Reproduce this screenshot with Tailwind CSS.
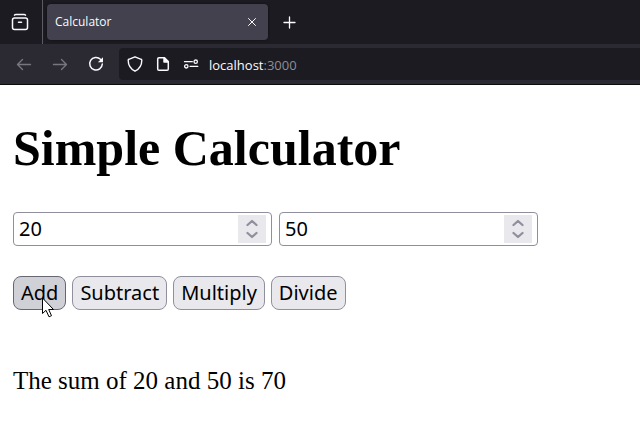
<!DOCTYPE html>
<html lang="en">
<head>
<meta charset="utf-8">
<meta name="viewport" content="width=device-width, initial-scale=1">
<title>Calculator</title>
<script src="https://cdn.jsdelivr.net/npm/@tailwindcss/browser@4"></script>
</head>
<body class="min-h-screen bg-white text-black">
<header class="border-b border-[#0c0c0d] bg-[#2b2a33] font-['Open_Sans','Noto_Sans',sans-serif] text-[#fbfbfe]">
  <div class="flex h-11 items-center bg-[#1c1b22]">
    <button type="button" aria-label="Recent browsing" class="flex h-11 w-[43px] items-center justify-center border-r border-[#5b5b66] pr-0.5">
      <svg class="size-5" viewBox="0 0 20 20" fill="none" stroke="currentColor" stroke-width="1.5" stroke-linecap="round"><path d="M4.500 3.200Q5 2.400 6 2.400h8q1 0 1.500.8"/><rect x="2.500" y="6" width="15" height="11.500" rx="2"/><path d="M8.500 10.300h3"/></svg>
    </button>
    <div class="ml-1 flex h-9 w-[221px] items-center justify-between rounded bg-[#42414d] px-2 shadow-[0_0_3px_#0008]">
      <span class="text-[12px] leading-4">Calculator</span>
      <button type="button" aria-label="Close tab" class="flex size-4 items-center justify-center">
        <svg class="size-4" viewBox="0 0 16 16" stroke="currentColor" stroke-width="1" stroke-linecap="round"><path d="m4.500 4.500 7 7m0-7-7 7"/></svg>
      </button>
    </div>
    <button type="button" aria-label="New tab" class="ml-3 flex size-5 items-center justify-center">
      <svg class="size-4" viewBox="0 0 16 16" stroke="currentColor" stroke-width="1.300" stroke-linecap="round"><path d="M7.500 3v11M2 8.500h11"/></svg>
    </button>
  </div>
  <nav class="flex h-10 items-center pl-4">
    <div class="flex items-center gap-5">
      <button type="button" aria-label="Back" class="text-[#77767e]">
        <svg class="block size-4" viewBox="0 0 16 16" fill="none" stroke="currentColor" stroke-width="1.400" stroke-linecap="round" stroke-linejoin="round"><path d="M14.500 8.500h-13M6.500 3.500l-5 5 5 5"/></svg>
      </button>
      <button type="button" aria-label="Forward" class="text-[#77767e]">
        <svg class="block size-4" viewBox="0 0 16 16" fill="none" stroke="currentColor" stroke-width="1.400" stroke-linecap="round" stroke-linejoin="round"><path d="M1.500 8.500h13M9.500 3.500l5 5-5 5"/></svg>
      </button>
      <button type="button" aria-label="Reload">
        <svg class="block size-4" viewBox="0 0 16 16" fill="none" stroke="currentColor" stroke-width="1.500" stroke-linecap="round"><path d="M12.500 3.300A6.300 6.300 0 1 0 14.300 8"/><path d="M15 1.200V6.300H9.900z" fill="currentColor" stroke="none"/></svg>
      </button>
    </div>
    <div class="ml-[15px] flex h-8 min-w-0 flex-1 items-center rounded-l bg-[#1c1b22] pl-2">
      <div class="flex items-center gap-3">
        <svg class="size-4" viewBox="0 0 16 16" fill="none" stroke="currentColor" stroke-width="1.400" stroke-linejoin="round"><path d="M8 .8 14.200 3.300q.600 0 .600 1C14.800 9 12.500 13 8 15.200 3.500 13 1.200 9 1.200 4.300q0-1 .600-1z"/></svg>
        <svg class="size-4" viewBox="0 0 16 16" fill="none" stroke="currentColor" stroke-width="1.500" stroke-linejoin="round"><path d="M9.500 1.700H4q-1.300 0-1.300 1.300v10q0 1.300 1.300 1.300h8q1.300 0 1.300-1.300V5.500z"/><path d="M9 1.700v4.300h4.300z" fill="currentColor"/></svg>
        <svg class="size-4" viewBox="0 0 16 16" fill="none" stroke="currentColor" stroke-width="1.300" stroke-linecap="round"><path d="M1.500 5.700h7.800M7 10.300h7.800"/><circle cx="12.700" cy="5.700" r="1.700"/><circle cx="3.300" cy="10.300" r="1.700"/></svg>
      </div>
      <div role="textbox" tabindex="0" aria-label="Address" class="ml-2.5 pt-0.5 text-[13px] leading-5">localhost<span class="text-[#8f8e96]">:3000</span></div>
    </div>
  </nav>
</header>
<main class="px-[13px] pt-8">
  <h1 class="font-['Liberation_Serif',serif] text-[50px] font-bold leading-[62px]">Simple Calculator</h1>
  <form onsubmit="return false">
    <div class="mt-[33px] flex flex-wrap gap-[7px] font-['Noto_Sans',sans-serif] text-[20px]">
      <div class="flex h-[34px] w-[259px] items-center rounded border border-[#8f8f9d] pr-[5px]">
        <input type="number" value="20" aria-label="First number" class="min-w-0 flex-1 appearance-none bg-transparent pl-[5px] leading-7 outline-none [appearance:textfield]">
        <div class="flex h-7 w-7 flex-col items-center justify-center gap-1 bg-[#e9e9ed] text-[#8f8f9d]">
          <button type="button" aria-label="Increase first number"><svg class="block h-2 w-3" viewBox="0 0 12 8" fill="none" stroke="currentColor" stroke-width="2.300" stroke-linecap="round" stroke-linejoin="round"><path d="m1.500 6 4.500-4 4.500 4"/></svg></button>
          <button type="button" aria-label="Decrease first number"><svg class="block h-2 w-3" viewBox="0 0 12 8" fill="none" stroke="currentColor" stroke-width="2.300" stroke-linecap="round" stroke-linejoin="round"><path d="m1.500 2 4.500 4 4.500-4"/></svg></button>
        </div>
      </div>
      <div class="flex h-[34px] w-[259px] items-center rounded border border-[#8f8f9d] pr-[5px]">
        <input type="number" value="50" aria-label="Second number" class="min-w-0 flex-1 appearance-none bg-transparent pl-[5px] leading-7 outline-none [appearance:textfield]">
        <div class="flex h-7 w-7 flex-col items-center justify-center gap-1 bg-[#e9e9ed] text-[#8f8f9d]">
          <button type="button" aria-label="Increase second number"><svg class="block h-2 w-3" viewBox="0 0 12 8" fill="none" stroke="currentColor" stroke-width="2.300" stroke-linecap="round" stroke-linejoin="round"><path d="m1.500 6 4.500-4 4.500 4"/></svg></button>
          <button type="button" aria-label="Decrease second number"><svg class="block h-2 w-3" viewBox="0 0 12 8" fill="none" stroke="currentColor" stroke-width="2.300" stroke-linecap="round" stroke-linejoin="round"><path d="m1.500 2 4.500 4 4.500-4"/></svg></button>
        </div>
      </div>
    </div>
    <div class="mt-[30px] flex flex-wrap gap-1.5 font-['Noto_Sans',sans-serif] text-[20px] leading-8">
      <button type="button" class="relative rounded-lg border border-[#676774] bg-[#d0d0d7] px-[7px]">Add
        <svg class="absolute left-[28px] top-[20px] h-[21px] w-[13px]" viewBox="0 0 13 21" aria-hidden="true"><path d="M.500 1v15.500l3.500-3.200 3 6.500 2.500-1.100-2.800-6.200H11.500z" fill="#fff" stroke="#000" stroke-width="1"/></svg>
      </button>
      <button type="button" class="rounded-lg border border-[#8f8f9d] bg-[#e9e9ed] px-[7px]">Subtract</button>
      <button type="button" class="rounded-lg border border-[#8f8f9d] bg-[#e9e9ed] px-[7px]">Multiply</button>
      <button type="button" class="rounded-lg border border-[#8f8f9d] bg-[#e9e9ed] px-[7px]">Divide</button>
    </div>
  </form>
  <p class="mt-14 font-['Liberation_Serif',serif] text-[25px] leading-[30px]">The sum of 20 and 50 is 70</p>
</main>
</body>
</html>
